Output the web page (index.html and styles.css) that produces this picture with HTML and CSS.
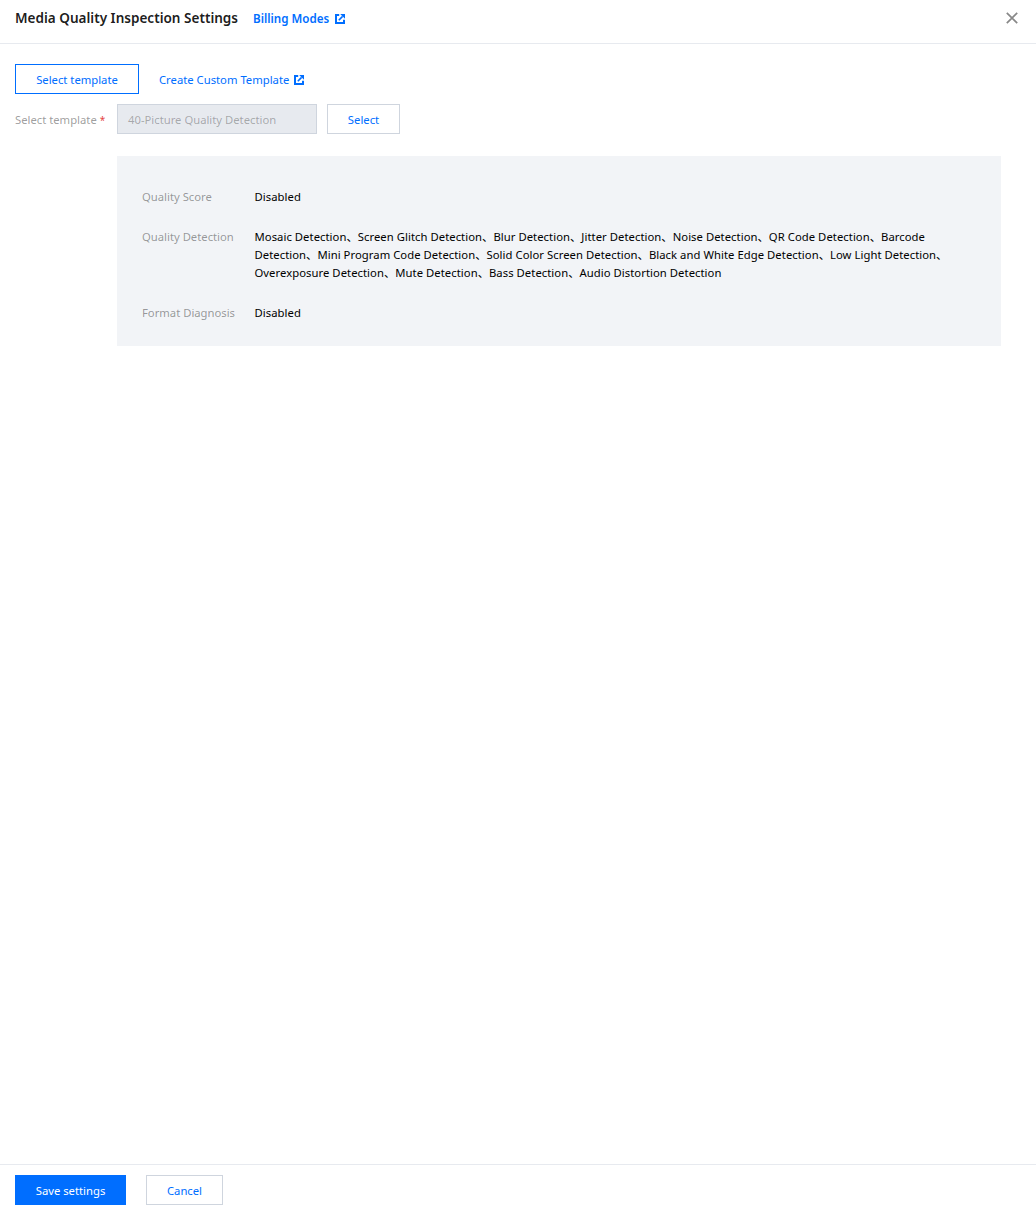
FILE: index.html
```html
<!DOCTYPE html>
<html lang="en">
<head>
<meta charset="utf-8">
<title>Media Quality Inspection Settings</title>
<link rel="stylesheet" href="styles.css">
</head>
<body>
<div class="drawer">
  <header class="head">
    <h1 class="title">Media Quality Inspection Settings</h1>
    <a class="link link-bold">Billing Modes
      <svg class="ext" viewBox="0 0 10 10"><path d="M4.2 1H1v8h8V5.8" fill="none" stroke="currentColor" stroke-width="2"/><path d="M5.2 0H10v4.8z" fill="currentColor"/><path d="M7.6 2.4 3.8 6.2" fill="none" stroke="currentColor" stroke-width="1.6"/></svg>
    </a>
    <button class="close" aria-label="Close">
      <svg viewBox="0 0 12 12" width="12" height="12"><path d="M.8.8l10.4 10.4M11.2.8.8 11.2" fill="none" stroke="#888" stroke-width="1.7"/></svg>
    </button>
  </header>
  <main class="body">
    <div class="tabs">
      <button class="btn btn-active">Select template</button>
      <a class="link">Create Custom Template
        <svg class="ext" viewBox="0 0 10 10"><path d="M4.2 1H1v8h8V5.8" fill="none" stroke="currentColor" stroke-width="2"/><path d="M5.2 0H10v4.8z" fill="currentColor"/><path d="M7.6 2.4 3.8 6.2" fill="none" stroke="currentColor" stroke-width="1.6"/></svg>
      </a>
    </div>
    <div class="field">
      <label class="field-label">Select template <span class="req">*</span></label>
      <div class="input">40-Picture Quality Detection</div>
      <button class="btn btn-select">Select</button>
    </div>
    <section class="panel">
      <div class="row"><div class="key">Quality Score</div><div class="val">Disabled</div></div>
      <div class="row"><div class="key">Quality Detection</div><div class="val">Mosaic Detection、Screen Glitch Detection、Blur Detection、Jitter Detection、Noise Detection、QR Code Detection、Barcode Detection、Mini Program Code Detection、Solid Color Screen Detection、Black and White Edge Detection、Low Light Detection、Overexposure Detection、Mute Detection、Bass Detection、Audio Distortion Detection</div></div>
      <div class="row"><div class="key">Format Diagnosis</div><div class="val">Disabled</div></div>
    </section>
  </main>
  <footer class="foot">
    <button class="btn btn-primary">Save settings</button>
    <button class="btn btn-cancel">Cancel</button>
  </footer>
</div>
</body>
</html>
```
FILE: styles.css
```css
* { box-sizing: border-box; }
html, body { margin: 0; height: 100%; }
body {
  font-family: "Noto Sans", "Noto Sans CJK SC", sans-serif;
  font-size: 11.28px;
  line-height: 18px;
  color: #000;
  background: #fff;
  overflow: hidden;
}
.drawer { display: flex; flex-direction: column; height: 1209px; }
.head {
  height: 44px;
  flex: none;
  display: flex;
  align-items: center;
  padding: 0 18px 7px 15px;
  border-bottom: 1px solid #e7eaef;
}
.title { margin: 0 15px 0 0; font-size: 13.55px; line-height: 20px; font-weight: 600; color: rgba(0,0,0,.9); }
.link { color: #006eff; display: inline-flex; align-items: center; gap: 5px; padding-top: 1px; }
.link-bold { font-weight: 600; font-size: 11.6px; padding-top: 2px; gap: 6px; }
.ext { width: 10px; height: 10px; flex: none; }
.close { margin-left: auto; padding: 0; border: 0; background: none; display: flex; }
.body { flex: 1; padding: 20px 35px 0 15px; }
.tabs { display: flex; align-items: center; gap: 20px; }
.btn {
  font: inherit;
  height: 30px;
  padding: 1px 0 0;
  white-space: nowrap;
  background: #fff;
  color: #006eff;
  border: 1px solid #cfd5de;
}
.btn-active { border-color: #006eff; width: 124px; }
.field { display: flex; align-items: center; margin-top: 10px; }
.field-label { width: 102px; color: rgba(0,0,0,.4); padding-top: 1px; }
.req { color: #e54545; font-size: 10px; }
.input {
  width: 200px;
  height: 30px;
  padding: 1px 10px 0;
  line-height: 28px;
  background: #e7eaef;
  border: 1px solid #cfd5de;
  color: rgba(0,0,0,.3);
}
.btn-select { width: 73px; margin-left: 10px; }
.panel { margin: 22px 0 0 102px; padding: 32px 25px 16px; background: #f2f4f7; height: 190px; }
.row { display: flex; margin-bottom: 22px; }
.key { width: 112.5px; flex: none; color: rgba(0,0,0,.4); }
.val { flex: 1; padding-right: 20px; letter-spacing: .05px; }
.foot {
  height: 45px;
  flex: none;
  display: flex;
  gap: 20px;
  padding: 10px 15px 0;
  border-top: 1px solid #e7eaef;
}
.btn-primary { width: 111px; background: #006eff; color: #fff; border-color: #006eff; }
.btn-cancel { width: 77px; }
```
